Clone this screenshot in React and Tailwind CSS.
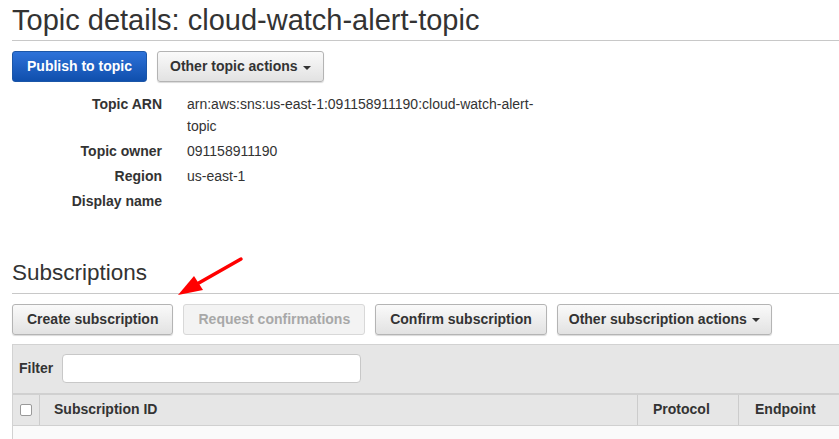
import React from "react";

const base =
  "h-[31px] rounded-[3px] border text-[14px] font-bold flex items-center whitespace-nowrap";
const btn = base + " px-[14px]";
const grayLook =
  " border-[#b4b4b4] bg-gradient-to-b from-[#fafafa] to-[#e2e2e2] text-[#333] shadow-[0_1px_1px_rgba(0,0,0,0.15)]";
const grayBtn = btn + grayLook;

const Caret = () => (
  <span className="ml-[5px] inline-block w-0 h-0 border-l-[4px] border-r-[4px] border-t-[4px] border-l-transparent border-r-transparent border-t-[#333] mt-[2px]" />
);

const Row = ({ label, children }) => (
  <div className="flex py-[1.5px]">
    <div className="w-[150px] text-right font-bold text-[#333]">{label}</div>
    <div className="ml-[25px] w-[360px] text-[#333] leading-[22px]">{children}</div>
  </div>
);

export default function App() {
  return (
    <div
      className="w-[839px] h-[439px] overflow-hidden bg-white pl-[12px]"
      style={{ fontFamily: '"Liberation Sans", Arial, sans-serif' }}
    >
      <h1 className="text-[29px] leading-[38px] text-[#333] pt-[1px] h-[40px]">
        Topic details: cloud-watch-alert-topic
      </h1>
      <div className="border-t border-[#c8c8c8]" />

      <div className="flex gap-[10px] mt-[10px]">
        <button
          className={
            btn +
            " border-[#1b56a8] bg-gradient-to-b from-[#2d72d9] to-[#0f4fad] text-white"
          }
        >
          Publish to topic
        </button>
        <button className={base + " px-[12px]" + grayLook}>
          Other topic actions
          <Caret />
        </button>
      </div>

      <div className="mt-[9.5px] text-[14px] leading-[22px]">
        <Row label="Topic ARN">
          arn:aws:sns:us-east-1:091158911190:cloud-watch-alert-topic
        </Row>
        <Row label="Topic owner">091158911190</Row>
        <Row label="Region">us-east-1</Row>
        <Row label="Display name"></Row>
      </div>

      <div className="relative">
        <h2 className="mt-[44px] text-[22.5px] leading-[30px] text-[#333] h-[35px]">
          Subscriptions
        </h2>
        <svg
          className="absolute left-[152px] top-[-4px]"
          width="90"
          height="50"
          viewBox="0 0 90 50"
        >
          <line x1="77" y1="5" x2="33" y2="30" stroke="#ff0000" strokeWidth="3.5" strokeLinecap="round" />
          <polygon points="14,41 30,22 39,36" fill="#ff0000" />
        </svg>
      </div>
      <div className="border-t border-[#c8c8c8]" />

      <div className="flex gap-[10px] mt-[10px]">
        <button className={grayBtn}>Create subscription</button>
        <button className={btn + " border-[#d8d8d8] bg-[#f3f3f3] text-[#a8a8a8]"}>
          Request confirmations
        </button>
        <button className={grayBtn}>Confirm subscription</button>
        <button className={base + " px-[11px]" + grayLook}>
          Other subscription actions
          <Caret />
        </button>
      </div>

      <div className="mt-[9px] bg-[#e6e6e6] border-t border-l border-[#d2d2d2]">
        <div className="flex items-center h-[48px] pl-[6px]">
          <span className="text-[14px] font-bold text-[#333]">Filter</span>
          <div className="ml-[9px] w-[299px] h-[29px] bg-white border border-[#c8c8c8] rounded-[4px]" />
        </div>
        <div className="flex h-[33px] border-t-2 border-b border-[#d0d0d0] text-[14px] font-bold text-[#333]">
          <div className="w-[27px] border-r border-[#cccccc] flex items-center justify-center">
            <div className="w-[12px] h-[12px] bg-white border border-[#999] rounded-[2px]" />
          </div>
          <div className="w-[598px] border-r border-[#cccccc] flex items-center pl-[14px]">
            Subscription ID
          </div>
          <div className="w-[101px] border-r border-[#cccccc] flex items-center pl-[15px]">
            Protocol
          </div>
          <div className="flex-1 flex items-center pl-[16px]">Endpoint</div>
        </div>
        <div className="h-[20px] bg-[#fafafa]" />
      </div>
    </div>
  );
}
